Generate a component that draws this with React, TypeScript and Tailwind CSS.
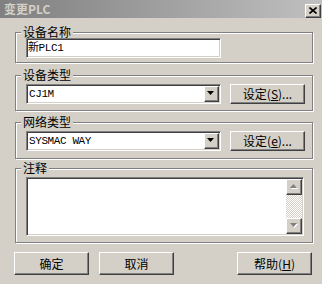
import React from "react";

const raised =
  "bg-[#d4d0c8] border border-t-white border-l-white border-b-[#404040] border-r-[#404040] shadow-[inset_-1px_-1px_0_#808080]";
const sunken =
  "bg-white border border-t-[#808080] border-l-[#808080] border-b-white border-r-white shadow-[inset_1px_1px_0_#404040,inset_-1px_-1px_0_#d4d0c8] p-[1px]";
const group =
  "relative ml-[15px] w-[298px] border border-[#808080] shadow-[inset_1px_1px_0_#fff,1px_1px_0_#fff] pl-[10px]";
const legend =
  "absolute left-[5px] top-[-7px] bg-[#d4d0c8] px-[2px] text-[12px] leading-[12px] text-black";
const mono = { fontFamily: '"Liberation Mono","Noto Sans CJK SC",monospace' };

function Arrow({ down, disabled }: { down?: boolean; disabled?: boolean }) {
  const pts = down ? "0,0 7,0 3.5,4" : "0,4 7,4 3.5,0";
  return (
    <svg width="9" height="6" viewBox="0 0 9 6">
      {disabled && (
        <polygon points={pts} fill="#ffffff" transform="translate(1,1)" />
      )}
      <polygon points={pts} fill={disabled ? "#808080" : "#000000"} />
    </svg>
  );
}

function Combo({ value }: { value: string }) {
  return (
    <div className={`flex h-[20px] w-[195px] ${sunken}`}>
      <div
        className="flex-1 flex items-center pl-[1px] text-[11px] tracking-[-0.4px] text-black"
        style={mono}
      >
        {value}
      </div>
      <div className={`w-[15px] h-full flex items-center justify-center ${raised}`}>
        <Arrow down />
      </div>
    </div>
  );
}

function Btn({
  children,
  className = "",
}: {
  children: React.ReactNode;
  className?: string;
}) {
  return (
    <div
      className={`flex items-center justify-center w-[75px] text-[12px] leading-[12px] text-black ${raised} ${className}`}
    >
      {children}
    </div>
  );
}

export default function App() {
  return (
    <div
      className="w-[322px] h-[284px] bg-[#d4d0c8] overflow-hidden"
      style={{ fontFamily: '"Noto Sans CJK SC","Liberation Sans",sans-serif' }}
    >
      {/* title bar */}
      <div className="h-[18px] flex items-center bg-gradient-to-r from-[#808080] to-[#c0c0c0]">
        <span className="pl-[4px] text-[12px] leading-[12px] font-bold text-[#d4d0c8]">
          变更PLC
        </span>
        <div
          className={`ml-auto mr-[1px] mt-[3px] w-[16px] h-[14px] flex items-center justify-center ${raised}`}
        >
          <svg width="8" height="7" viewBox="0 0 8 7">
            <path d="M0.5 0.5 L7.5 6.5 M7.5 0.5 L0.5 6.5" stroke="#000" strokeWidth="1.6" />
          </svg>
        </div>
      </div>

      {/* 设备名称 */}
      <div className={`${group} mt-[14px] pt-[5px] pb-[4px]`}>
        <span className={legend}>设备名称</span>
        <div className={`h-[20px] w-[195px] flex items-center ${sunken}`}>
          <span className="pl-[0px] text-[11px] tracking-[-0.4px] text-black" style={mono}>
            新PLC1
          </span>
        </div>
      </div>

      {/* 设备类型 */}
      <div className={`${group} mt-[12px] pt-[8px] pb-[6px]`}>
        <span className={legend}>设备类型</span>
        <div className="flex items-center">
          <Combo value="CJ1M" />
          <Btn className="ml-[9px] h-[20px]">
            设定(<u>S</u>)...
          </Btn>
        </div>
      </div>

      {/* 网络类型 */}
      <div className={`${group} mt-[11px] pt-[8px] pb-[7px]`}>
        <span className={legend}>网络类型</span>
        <div className="flex items-center">
          <Combo value="SYSMAC WAY" />
          <Btn className="ml-[9px] h-[20px]">
            设定(<u>e</u>)...
          </Btn>
        </div>
      </div>

      {/* 注释 */}
      <div className={`${group} mt-[9px] pt-[8px] pb-[6px]`}>
        <span className={legend}>注释</span>
        <div className={`flex h-[59px] w-[278px] ${sunken}`}>
          <div className="flex-1" />
          <div className="w-[16px] flex flex-col">
            <div className={`h-[16px] flex items-center justify-center ${raised}`}>
              <Arrow disabled />
            </div>
            <div className="flex-1 bg-[repeating-conic-gradient(#ffffff_0_25%,#d4d0c8_0_50%)] bg-[length:2px_2px]" />
            <div className={`h-[16px] flex items-center justify-center ${raised}`}>
              <Arrow down disabled />
            </div>
          </div>
        </div>
      </div>

      {/* buttons */}
      <div className="flex mt-[9px] pl-[14px]">
        <Btn className="h-[23px]">确定</Btn>
        <Btn className="h-[23px] ml-[10px]">取消</Btn>
        <Btn className="h-[23px] ml-[63px]">
          帮助(<u>H</u>)
        </Btn>
      </div>
    </div>
  );
}
